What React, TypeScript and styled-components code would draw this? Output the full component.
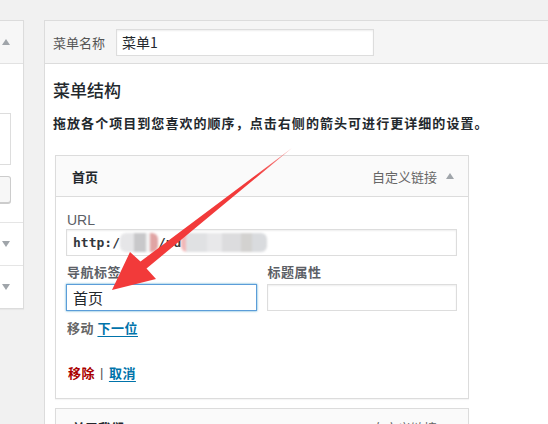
import styled, { createGlobalStyle } from 'styled-components';

const GlobalStyle = createGlobalStyle`
  html, body {
    margin: 0;
    padding: 0;
    background: #f1f1f1;
    width: 548px;
    height: 424px;
    overflow: hidden;
  }
  body {
    font-family: "Noto Sans CJK SC", "Liberation Sans", sans-serif;
    color: #23282d;
  }
  * {
    box-sizing: border-box;
  }
`;

export default function App() {
  return (
    <Page>
      <GlobalStyle />
      <Columns>
        <SidePanel>
          <SideHead>
            <Caret $dir="up" />
          </SideHead>
          <SideBody>
            <SideBox />
            <SideButton />
            <SideSection>
              <Caret $dir="down" />
            </SideSection>
            <SideSection>
              <Caret $dir="down" />
            </SideSection>
          </SideBody>
        </SidePanel>

        <MainPanel>
          <MenuHeader>
            <HeaderLabel>菜单名称</HeaderLabel>
            <NameInput>菜单1</NameInput>
          </MenuHeader>
          <MenuBody>
            <Title>菜单结构</Title>
            <Hint>拖放各个项目到您喜欢的顺序，点击右侧的箭头可进行更详细的设置。</Hint>

            <Item>
              <ItemHead>
                <ItemTitle>首页</ItemTitle>
                <ItemType>
                  自定义链接
                  <Caret $dir="up" />
                </ItemType>
              </ItemHead>
              <ItemBody>
                <FieldLabel $latin>URL</FieldLabel>
                <Field>
                  <Mono>http:/</Mono>
                  <Smudge $w={38} $tone="a" />
                  <Mono>/ud</Mono>
                  <Smudge $w={86} $tone="b" />
                </Field>
                <FieldRow>
                  <div>
                    <FieldLabel>导航标签</FieldLabel>
                    <Field $focus>首页</Field>
                  </div>
                  <div>
                    <FieldLabel>标题属性</FieldLabel>
                    <Field />
                  </div>
                </FieldRow>
                <MoveLine>
                  移动 <LinkText>下一位</LinkText>
                </MoveLine>
                <Actions>
                  <Remove>移除</Remove>
                  <Pipe>|</Pipe>
                  <LinkText>取消</LinkText>
                </Actions>
              </ItemBody>
            </Item>

            <Item>
              <ItemHead $tight>
                <ItemTitle>关于我们</ItemTitle>
                <ItemType>
                  自定义链接
                  <Caret $dir="down" />
                </ItemType>
              </ItemHead>
            </Item>
          </MenuBody>
        </MainPanel>
      </Columns>

      <Arrow viewBox="0 0 548 424" width="548" height="424">
        <defs>
          <linearGradient id="fade" x1="112" y1="290" x2="292" y2="148" gradientUnits="userSpaceOnUse">
            <stop offset="0" stopColor="#f23a3a" />
            <stop offset="0.8" stopColor="#f23a3a" />
            <stop offset="1" stopColor="#f7a0a0" />
          </linearGradient>
        </defs>
        <polygon
          points="112,290 130,252 140.5,261.5 292,148 146.5,268.5 156,279"
          fill="url(#fade)"
        />
      </Arrow>
    </Page>
  );
}

const Page = styled.div`
  position: relative;
  width: 548px;
  height: 424px;
  overflow: hidden;
`;

const Columns = styled.div`
  display: flex;
  align-items: flex-start;
  gap: 20px;
  padding-top: 20px;
`;

const Caret = styled.span<{ $dir: 'up' | 'down' }>`
  display: inline-block;
  width: 0;
  height: 0;
  border-left: 4px solid transparent;
  border-right: 4px solid transparent;
  ${(p) =>
    p.$dir === 'up'
      ? 'border-bottom: 6px solid #a0a5aa;'
      : 'border-top: 6px solid #a0a5aa;'}
`;

/* left column, mostly cut off by the window */
const SidePanel = styled.div`
  width: 24px;
  flex-shrink: 0;
  border-top: 1px solid #dcdcdc;
  border-right: 1px solid #dcdcdc;
  border-bottom: 1px solid #dcdcdc;
  box-shadow: 0 1px 1px rgba(0, 0, 0, 0.04);
`;

const SideHead = styled.div`
  height: 43px;
  display: flex;
  align-items: center;
  padding-left: 2px;
  background: #f7f7f7;
  border-bottom: 1px solid #e2e2e2;
`;

const SideBody = styled.div`
  background: #fff;
  padding-top: 49px;
`;

const SideBox = styled.div`
  width: 11px;
  height: 52px;
  border: 1px solid #ddd;
  border-left: none;
  background: #fff;
`;

const SideButton = styled.div`
  width: 11px;
  height: 27px;
  margin-top: 11px;
  margin-bottom: 19px;
  border: 1px solid #ccc;
  border-left: none;
  border-radius: 0 3px 3px 0;
  background: #f7f7f7;
  box-shadow: 0 1px 0 #ccc;
`;

const SideSection = styled.div`
  height: 43px;
  display: flex;
  align-items: center;
  padding-left: 2px;
  border-top: 1px solid #e5e5e5;
`;

/* main menu editor */
const MainPanel = styled.div`
  width: 540px;
  flex-shrink: 0;
  border-top: 1px solid #dcdcdc;
  border-left: 1px solid #dcdcdc;
`;

const MenuHeader = styled.div`
  height: 43px;
  display: flex;
  align-items: center;
  gap: 11px;
  padding-left: 8px;
  background: #f5f5f5;
  border-bottom: 1px solid #dcdcdc;
`;

const HeaderLabel = styled.span`
  font-size: 13px;
  color: #555;
`;

const NameInput = styled.div`
  width: 258px;
  height: 27px;
  display: flex;
  align-items: center;
  padding-left: 5px;
  font-size: 14px;
  color: #23282d;
  background: #fff;
  border: 1px solid #ddd;
  box-shadow: inset 0 1px 2px rgba(0, 0, 0, 0.07);
`;

const MenuBody = styled.div`
  background: #fff;
  padding: 14px 0 0 8px;
  height: 380px;
`;

const Title = styled.h3`
  margin: 0;
  font-size: 17px;
  font-weight: 500;
  line-height: 24px;
  color: #23282d;
`;

const Hint = styled.p`
  margin: 12px 0 0;
  font-size: 13px;
  font-weight: 700;
  line-height: 18px;
  letter-spacing: 1.05px;
  color: #23282d;
`;

const Item = styled.div`
  width: 414px;
  margin: 23px 0 0 2px;
  border: 1px solid #dcdcdc;
  box-shadow: 0 1px 1px rgba(0, 0, 0, 0.04);
  & + & {
    margin-top: 9px;
  }
`;

const ItemHead = styled.div<{ $tight?: boolean }>`
  height: 41px;
  display: flex;
  align-items: ${(p) => (p.$tight ? 'flex-start' : 'center')};
  padding: ${(p) => (p.$tight ? '9px 14px 0 16px' : '0 14px 0 16px')};
  justify-content: space-between;
  background: #fafafa;
  border-bottom: 1px solid #dcdcdc;
`;

const ItemTitle = styled.span`
  font-size: 13px;
  font-weight: 700;
  color: #23282d;
`;

const ItemType = styled.span`
  display: flex;
  align-items: center;
  gap: 9px;
  font-size: 13px;
  color: #666;
`;

const ItemBody = styled.div`
  background: #fff;
  padding: 14px 11px 17px 10px;
`;

const FieldLabel = styled.div<{ $latin?: boolean }>`
  height: 18px;
  line-height: 18px;
  padding-left: 1px;
  font-size: ${(p) => (p.$latin ? '14px' : '13px')};
  font-family: ${(p) =>
    p.$latin
      ? '"Liberation Sans", sans-serif'
      : '"Noto Sans CJK SC", sans-serif'};
  font-weight: ${(p) => (p.$latin ? 400 : 600)};
  color: #5c6066;
  letter-spacing: ${(p) => (p.$latin ? '0' : '0.5px')};
`;

const Field = styled.div<{ $focus?: boolean }>`
  height: 27px;
  display: flex;
  align-items: center;
  padding-left: 6px;
  font-size: 15px;
  color: #23282d;
  background: #fff;
  border: 1px solid ${(p) => (p.$focus ? '#5b9dd9' : '#ddd')};
  box-shadow: ${(p) =>
    p.$focus
      ? '0 0 2px rgba(30, 140, 190, 0.8)'
      : 'inset 0 1px 2px rgba(0, 0, 0, 0.07)'};
  overflow: hidden;
`;

const Mono = styled.span`
  font-family: "DejaVu Sans Mono", "Liberation Mono", monospace;
  font-size: 13px;
  font-weight: 700;
  color: #32373c;
`;

const Smudge = styled.span<{ $w: number; $tone: 'a' | 'b' }>`
  display: inline-block;
  width: ${(p) => p.$w}px;
  height: 19px;
  border-radius: 6px;
  filter: blur(1.2px);
  background: ${(p) =>
    p.$tone === 'a'
      ? 'linear-gradient(90deg, #e6e6e8 0 38%, #c8c8ca 38% 68%, #f4f4f4 68% 78%, #e0a4a4 78% 100%)'
      : 'linear-gradient(90deg, #f2b8b8 0 6%, #e0e1e3 6% 30%, #e8e8ea 30% 48%, #dcdcde 48% 70%, #d3d2d0 70% 82%, #d9dbde 82% 100%)'};
`;

const FieldRow = styled.div`
  display: grid;
  grid-template-columns: 1fr 1fr;
  gap: 10px;
  margin-top: 7px;
  & ${FieldLabel} {
    margin-bottom: 3px;
  }
`;

const MoveLine = styled.div`
  margin-top: 8px;
  padding-left: 1px;
  height: 18px;
  line-height: 18px;
  font-size: 13px;
  font-weight: 600;
  color: #666;
  letter-spacing: 0.5px;
`;

const LinkText = styled.span`
  color: #0073aa;
  font-weight: 600;
  text-decoration: underline;
  text-underline-offset: 3px;
`;

const Actions = styled.div`
  margin-top: 26px;
  padding-left: 2px;
  display: flex;
  align-items: center;
  gap: 5px;
  height: 18px;
  font-size: 13px;
  font-weight: 700;
  letter-spacing: 0.5px;
`;

const Remove = styled.span`
  color: #a00;
`;

const Pipe = styled.span`
  font-weight: 400;
  color: #555;
  font-family: "Liberation Sans", sans-serif;
`;

const Arrow = styled.svg`
  position: absolute;
  top: 0;
  left: 0;
  pointer-events: none;
`;
